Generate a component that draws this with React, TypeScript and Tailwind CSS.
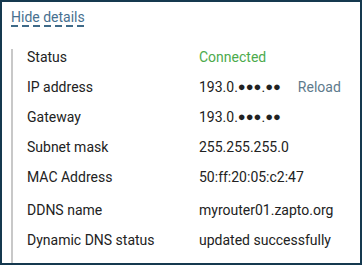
function Masked() {
  return (
    <span>
      193.0.
      <span className="text-[13px] align-[1px]">●●●</span>.
      <span className="text-[13px] align-[1px]">●●</span>
    </span>
  );
}

function Row({ label, children, className = "" }: { label: string; children: React.ReactNode; className?: string }) {
  return (
    <div className={`flex h-[16px] items-center ${className}`}>
      <div className="w-[172px] shrink-0">{label}</div>
      <div className="flex items-center">{children}</div>
    </div>
  );
}

export default function App() {
  return (
    <div
      className="w-[362px] h-[265px] border-2 border-[#15394f] bg-white text-[14px] text-[#222] overflow-hidden"
      style={{ fontFamily: "Roboto, 'Liberation Sans', sans-serif" }}
    >
      <div className="pl-[9px] pt-[7px] leading-[16px]">
        <button className="relative inline-block leading-[16px] text-[#47708f]">
          Hide details
          <span className="absolute left-0 right-0 -bottom-[2px] h-[2px] bg-[repeating-linear-gradient(to_right,#3f6a88_0_7px,transparent_7px_11px)]" />
        </button>
      </div>
      <div className="ml-[9px] mt-[24px] h-[300px] border-l-2 border-[#c8c8c8] pl-[14px] flex flex-col gap-[14px]">
        <Row label="Status">
          <span className="text-[#4caa4c]">Connected</span>
        </Row>
        <Row label="IP address">
          <Masked />
          <span className="ml-[17px] text-[#5e7a8c]">Reload</span>
        </Row>
        <Row label="Gateway">
          <Masked />
        </Row>
        <Row label="Subnet mask">255.255.255.0</Row>
        <Row label="MAC Address">50:ff:20:05:c2:47</Row>
        <Row label="DDNS name" className="mt-[3px]">myrouter01.zapto.org</Row>
        <Row label="Dynamic DNS status">updated successfully</Row>
      </div>
    </div>
  );
}
